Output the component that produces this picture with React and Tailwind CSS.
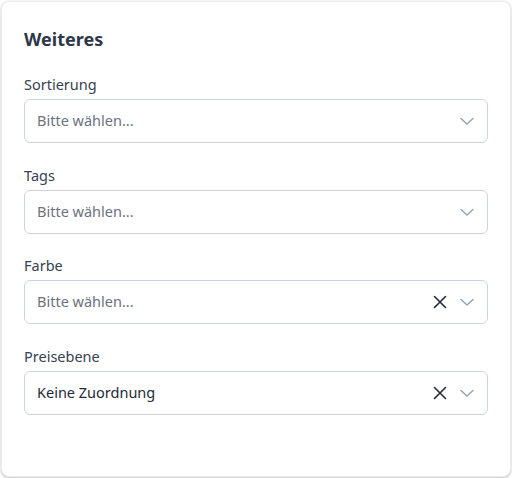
import React from "react";

const Chevron = () => (
  <svg width="16" height="16" viewBox="0 0 16 16" fill="none" stroke="#94a3b8" strokeWidth="1.5" strokeLinecap="round" strokeLinejoin="round">
    <path d="M2 5.5 L8 11 L14 5.5" />
  </svg>
);

const Cross = () => (
  <svg width="16" height="16" viewBox="0 0 16 16" fill="none" stroke="#1f2937" strokeWidth="1.6" strokeLinecap="round">
    <path d="M2.5 2.5 L13.5 13.5 M13.5 2.5 L2.5 13.5" />
  </svg>
);

function Field({ label, value, placeholder, clearable }) {
  return (
    <div className="flex flex-col">
      <div className="text-[14.5px] leading-[18px] text-[#374151] mb-[6px]">{label}</div>
      <div className="h-[44px] rounded-[6px] border border-[#cbd5e1] flex items-center pl-[12px] pr-[12px]">
        <div className={"flex-1 text-[14.5px] " + (value ? "text-[#1f2937]" : "text-[#6b7280]")}>
          {value || placeholder}
        </div>
        {clearable && (
          <div className="mr-[11px] flex items-center">
            <Cross />
          </div>
        )}
        <div className="flex items-center">
          <Chevron />
        </div>
      </div>
    </div>
  );
}

export default function App() {
  return (
    <div className="w-[512px] h-[478px] bg-white p-[1px]" style={{ fontFamily: '"Noto Sans", "Open Sans", sans-serif' }}>
      <div className="w-[510px] h-[476px] rounded-[8px] border border-[#ececec] shadow-[0_1px_3px_rgba(0,0,0,0.25)] bg-white px-[22px] pt-[23px]">
        <div className="text-[18px] leading-[28px] font-bold text-[#2d3748] mb-[22px]">Weiteres</div>
        <div className="flex flex-col gap-[22.6px]">
          <Field label="Sortierung" placeholder="Bitte wählen..." />
          <Field label="Tags" placeholder="Bitte wählen..." />
          <Field label="Farbe" placeholder="Bitte wählen..." clearable />
          <Field label="Preisebene" value="Keine Zuordnung" clearable />
        </div>
      </div>
    </div>
  );
}
